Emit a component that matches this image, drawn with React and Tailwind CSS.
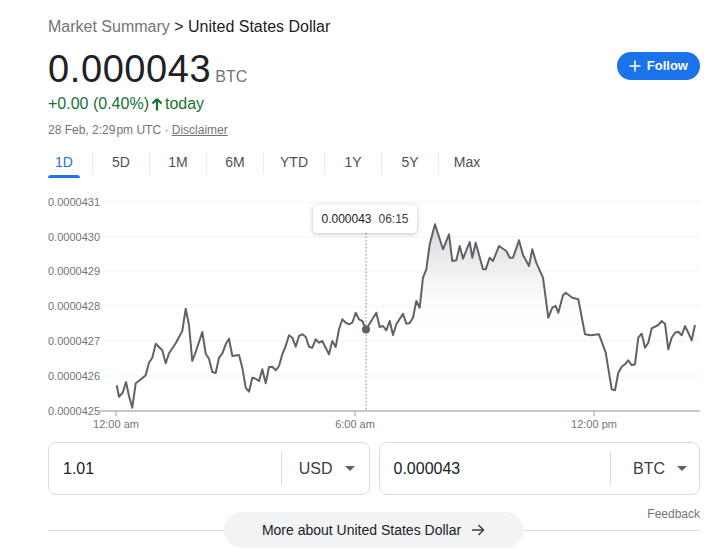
import React from 'react';

const pts = [
  [116.7, 384.3], [119, 395.7], [122.7, 391.7], [126, 381], [129, 395], [132.3, 406.7], [135.7, 382.3],
  [140, 379], [145.7, 374.3], [149, 361.7], [152.3, 356.7], [155.7, 342.7], [162.3, 349.3], [165.7, 362.3],
  [169, 352.3], [175.7, 342.3], [182.3, 330], [185.7, 307.7], [189, 324.3], [192.3, 360], [195.7, 351],
  [202.3, 331], [205.7, 352.7], [209, 357.7], [212.3, 371], [215.7, 372], [219, 356.7], [222.3, 352.7],
  [225.7, 343.3], [229, 337.7], [232.3, 355], [239, 354], [242.3, 366.7], [245.7, 386.7], [249, 390.7],
  [252.3, 376.7], [255.7, 377.7], [259, 380], [262.3, 368.3], [265.7, 382.3], [269, 366], [272.3, 365.7],
  [275.7, 369.3], [279, 365], [282.3, 353.3], [285.7, 345], [289, 334.3], [292.3, 336.7], [295.7, 345.7],
  [299, 335], [302.3, 333.3], [305.7, 335.7], [309, 345.7], [312.3, 346.7], [315.7, 338.3], [319, 341.7],
  [322.3, 340], [329, 353.3], [332.3, 340], [335.7, 346], [339, 328.3], [342.3, 318.3], [345.7, 321.7],
  [349, 323.3], [352.3, 321.7], [355.7, 311.7], [359, 318.3], [362.3, 320], [366, 328.5],
];

const rest = [
  [376.3, 311.7], [379.7, 326], [383, 325], [386.3, 329.3], [389.7, 320], [393, 334], [396.3, 323.3],
  [403, 312.7], [406.3, 322.7], [409.7, 322], [413, 316.7], [416.3, 300], [419.7, 306.7], [423, 276.7],
  [426.3, 268.3], [429.7, 243.3], [435, 223.3], [443, 248.3], [449, 233.3], [452.3, 260], [456.3, 259.3],
  [459.7, 245], [463, 257.7], [469.7, 241], [472.3, 256.7], [475.7, 241.7], [483, 268.3], [485.7, 268.3],
  [489.7, 256.7], [493, 260], [499, 245], [506.3, 250], [509.7, 256.7], [513, 256.7], [519, 239.3],
  [523, 254], [529, 265], [532.3, 248.3], [536.3, 261.7], [540.7, 271.7], [543, 276.7], [548.3, 316.7],
  [552.3, 306.7], [555.7, 305], [558.3, 311.7], [563, 294.3], [565.7, 291.7], [572.3, 296.7], [578.3, 298.3],
  [585, 333.3], [590.7, 334.3], [599, 333.3], [605.7, 351.7], [611.7, 388.3], [615, 389.3], [618.3, 371.7],
  [621.7, 365.7], [625, 363.3], [628.3, 359.3], [631.7, 364.3], [635, 363.3], [638.3, 336.7], [641.7, 332.7],
  [645, 346.7], [648.3, 341.7], [651.7, 327.3], [658.3, 324], [661.7, 320], [665, 322.7], [668.3, 348.3],
  [671.7, 336.7], [675, 331.7], [678.3, 330.7], [681.7, 334.3], [685, 325], [689, 333.3], [691.7, 339.3],
  [695, 324],
];

const toStr = (a) => a.map((p) => p.join(',')).join(' ');
const linePts = toStr([...pts, ...rest]);
const fillPts = toStr([[366, 410], [366, 328.5], ...rest, [695, 410]]);

const grid = [
  ['0.0000431', 201], ['0.0000430', 236], ['0.0000429', 270], ['0.0000428', 305],
  ['0.0000427', 340], ['0.0000426', 375], ['0.0000425', 410],
];

const ticks = [['12:00 am', 116], ['6:00 am', 355], ['12:00 pm', 594]];

const tabs = ['1D', '5D', '1M', '6M', 'YTD', '1Y', '5Y', 'Max'];

const Caret = () => (
  <svg width="10" height="5" viewBox="0 0 10 5" className="ml-3">
    <path d="M0 0 L10 0 L5 5 Z" fill="#5f6368" />
  </svg>
);

const Converter = ({ value, unit, sepRight }) => (
  <div className="flex-1 h-[53px] border border-[#dadce0] rounded-lg flex items-center">
    <div className="flex-1 pl-[14px] text-[16px] text-[#202124]">{value}</div>
    <div className="w-px h-[34px] bg-[#dadce0]" />
    <div className={`flex items-center justify-end ${sepRight}`}>
      <span className="text-[16px] text-[#3c4043]">{unit}</span>
      <Caret />
    </div>
  </div>
);

export default function App() {
  return (
    <div className="w-[728px] h-[558px] bg-white overflow-hidden pl-[48px] pr-[28px] font-['Liberation_Sans',Arial,sans-serif]">
      <div className="pt-[17px] text-[16px] leading-[20px]">
        <span className="text-[#70757a]">Market Summary</span>
        <span className="text-[#202124]"> &gt; United States Dollar</span>
      </div>

      <div className="flex items-start justify-between">
        <div>
          <div className="flex items-baseline mt-[12px]">
            <span className="text-[38px] leading-[40px] tracking-[0.6px] text-[#202124]">0.000043</span>
            <span className="ml-[4px] text-[16px] text-[#70757a]">BTC</span>
          </div>
          <div className="mt-[4px] text-[16px] leading-[22px] text-[#137333] flex items-center">
            <span>+0.00 (0.40%)</span>
            <svg width="12" height="13" viewBox="0 0 12 13" className="mx-[2px]">
              <path d="M6 1 L1.5 5.5 M6 1 L10.5 5.5 M6 1.5 V12.5" stroke="#137333" strokeWidth="2.2" fill="none" />
            </svg>
            <span>today</span>
          </div>
          <div className="mt-[7px] text-[12px] leading-[16px] text-[#70757a]">
            28 Feb, 2:29&#8202;pm UTC · <span className="underline">Disclaimer</span>
          </div>
        </div>
        <button className="mt-[15px] h-[28px] px-[12px] rounded-full bg-[#1a73e8] text-white text-[13px] font-bold flex items-center gap-[6px]">
          <svg width="12" height="12" viewBox="0 0 12 12">
            <path d="M6 0.5 V11.5 M0.5 6 H11.5" stroke="white" strokeWidth="1.6" />
          </svg>
          Follow
        </button>
      </div>

      <div className="flex mt-[11px] h-[30px]">
        {tabs.map((t, i) => (
          <div key={t} className="flex items-start">
            {i > 0 && <div className="w-px h-[22px] bg-[#ebebeb] mt-[3px]" />}
            <div className={`relative h-[30px] flex justify-center ${i === 0 ? 'w-[32px] mr-[12px]' : i === 4 ? 'w-[60px]' : 'w-[56px]'}`}>
              <span className={`text-[14px] leading-[26px] ${i === 0 ? 'text-[#1a73e8]' : 'text-[#4d5156]'}`}>{t}</span>
              {i === 0 && <div className="absolute left-0 right-0 bottom-[1px] h-[3px] rounded-t bg-[#1a73e8]" />}
            </div>
          </div>
        ))}
      </div>

      <div className="relative mt-[15px]">
        <svg width="652" height="240" viewBox="48 193 652 240" className="block">
          <defs>
            <linearGradient id="fill" gradientUnits="userSpaceOnUse" x1="0" y1="225" x2="0" y2="335">
              <stop offset="0" stopColor="#c4c7cc" stopOpacity="0.75" />
              <stop offset="1" stopColor="#ffffff" stopOpacity="0" />
            </linearGradient>
          </defs>
          {grid.map(([l, y]) => (
            <g key={l}>
              {y < 410 && <line x1="103" x2="700" y1={y} y2={y} stroke="#f1f3f4" strokeWidth="1" />}
              <text x="48" y={y + 4} fontSize="11" fill="#70757a" fontFamily="Liberation Sans, Arial, sans-serif">{l}</text>
            </g>
          ))}
          <polygon points={fillPts} fill="url(#fill)" />
          <line x1="366" x2="366" y1="232" y2="410" stroke="#80868b" strokeWidth="1" strokeDasharray="1.5 2" />
          <polyline points={linePts} fill="none" stroke="#5f6368" strokeWidth="2" strokeLinejoin="round" />
          <circle cx="366" cy="328.5" r="4" fill="#5f6368" />
          <line x1="100" x2="700" y1="410" y2="410" stroke="#b4b7bb" strokeWidth="1.5" />
          {ticks.map(([l, x]) => (
            <g key={l}>
              <line x1={x} x2={x} y1="410" y2="415" stroke="#9aa0a6" strokeWidth="1" />
              <text x={x} y="427" textAnchor="middle" fontSize="11" fill="#70757a" fontFamily="Liberation Sans, Arial, sans-serif">{l}</text>
            </g>
          ))}
        </svg>
        <div className="absolute left-[265px] top-[11px] h-[28px] w-[104px] bg-white rounded shadow-[0_1px_4px_rgba(0,0,0,0.25)] flex items-center justify-center text-[12px] text-[#202124] gap-[7px]">
          <span>0.000043</span>
          <span className="text-[#3c4043]">06:15</span>
        </div>
      </div>

      <div className="flex gap-[9px] mt-[8px]">
        <Converter value="1.01" unit="USD" sepRight="w-[87px] pr-[14px]" />
        <Converter value="0.000043" unit="BTC" sepRight="w-[88px] pr-[12px]" />
      </div>

      <div className="relative mt-[8px] h-[48px]">
        <div className="absolute right-0 top-[2px] text-[12px] text-[#70757a]">Feedback</div>
        <div className="absolute left-0 right-0 top-[27px] h-px bg-[#dadce0]" />
        <div className="absolute left-[176px] top-[9px] h-[36px] w-[299px] rounded-full bg-[#f1f3f4] flex items-center justify-center gap-[10px] text-[14px] text-[#202124]">
          More about United States Dollar
          <svg width="14" height="12" viewBox="0 0 14 12">
            <path d="M1 6 H12.5 M7.5 1 L12.5 6 L7.5 11" stroke="#3c4043" strokeWidth="1.5" fill="none" />
          </svg>
        </div>
      </div>
    </div>
  );
}
